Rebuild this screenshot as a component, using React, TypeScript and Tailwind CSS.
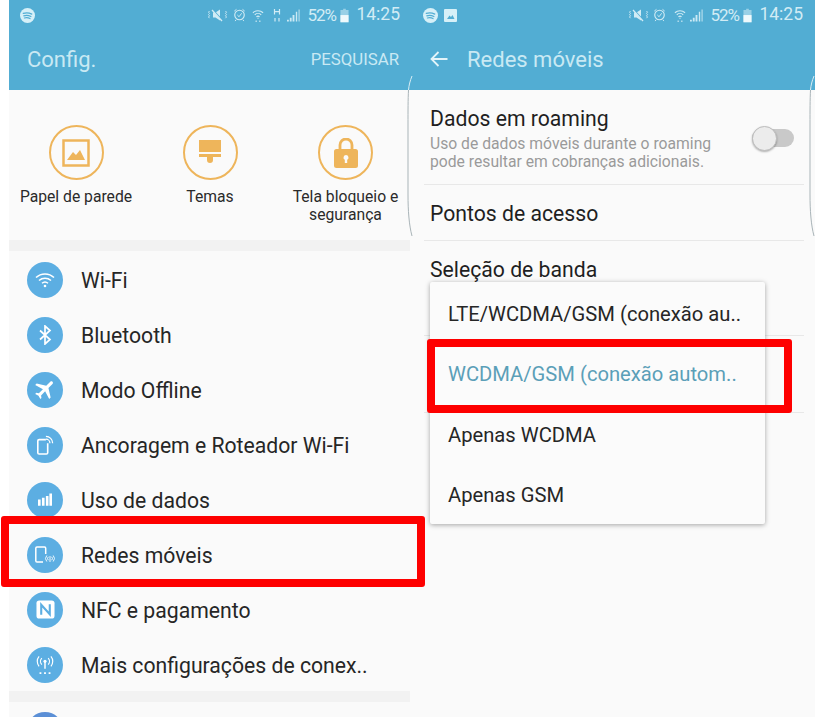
import React from "react";
import { MdFlight } from "react-icons/md";

const F = "font-['Roboto','Liberation_Sans',sans-serif]";

function Spotify() {
  return (
    <svg width="15" height="15" viewBox="0 0 15 15">
      <circle cx="7.5" cy="7.5" r="7.5" fill="#d6f0f8" />
      <path d="M3.2 5.4c3-.9 6-.6 8.6.7M3.8 7.8c2.5-.7 5-.4 7.1.7M4.4 10c2-.5 4-.3 5.6.6" fill="none" stroke="#52add3" strokeWidth="1.2" strokeLinecap="round" />
    </svg>
  );
}

function Status({ hsdpa }: { hsdpa?: boolean }) {
  const c = "#d2ecf5";
  return (
    <div className="flex items-center leading-none text-[#d2ecf5]">
      <svg width="20" height="14" viewBox="0 0 20 14" className={hsdpa ? "mr-[5px]" : "mr-[4px]"}>
        <path d="M5 4.5h2.5L12 1.5v11L7.500 9.500H5z" fill={c} />
        <path d="M4 1l11 12" stroke="#52add3" strokeWidth="1.500" />
        <path d="M4 2l10 11" stroke={c} strokeWidth="1.300" />
        <path d="M1.500 3l-1 1.200 1 1.200-1 1.200 1 1.200-1 1.200 1 1.200M17.500 3l1 1.200-1 1.200 1 1.200-1 1.200 1 1.200-1 1.200" fill="none" stroke={c} strokeWidth=".9" />
      </svg>
      <svg width="13" height="16" viewBox="0 0 15 16" className={hsdpa ? "mr-[6px]" : "mr-[8px]"}>
        <circle cx="7.500" cy="8" r="5.500" fill="none" stroke={c} strokeWidth="1.300" />
        <path d="M5 8l2 2 3-4M1.500 3.500L4 1.500M13.500 3.500L11 1.500M3.500 13.500l-1 1.500M11.500 13.500l1 1.500" fill="none" stroke={c} strokeWidth="1.100" />
      </svg>
      <svg width="12" height="15" viewBox="0 0 13 15" className={hsdpa ? "mr-[9px]" : "mr-[4px]"}>
        <path d="M1 4.500a8 8 0 0 1 11 0M3 6.800a5 5 0 0 1 7 0M4.800 9a2.500 2.500 0 0 1 3.400 0" fill="none" stroke={c} strokeWidth="1.200" />
        <path d="M6.500 10v1M4.500 13v1.500M8.500 13v1.500" stroke={c} strokeWidth="1.200" />
      </svg>
      {hsdpa && (
        <svg width="8" height="14" viewBox="0 0 8 14" className="mr-[6px]">
          <path d="M1.500 1v5.500M6.500 1v5.500M1.500 3.700h5M2 10v3.500M6 10v3.500" fill="none" stroke={c} strokeWidth="1.200" />
        </svg>
      )}
      <svg width="13" height="14" viewBox="0 0 14 14" className="mr-[7px]">
        <path d="M0 12h2v2H0zM3 10h2v4H3zM6 7h2v7H6zM9.500 3.500h1.500v10.500H9.500zM12.500 1h1v13h-1z" fill={c} opacity=".95" />
      </svg>
      <span className="w-[29px] whitespace-nowrap text-[17px] tracking-[-1px]">52%</span>
      <svg width="9" height="15" viewBox="0 0 10 15" className="ml-[4px] mr-[7px]">
        <path d="M3.500 0h3v1.500h3V15H.5V1.500h3z" fill={c} opacity=".55" />
        <path d="M.5 7h9v8h-9z" fill="#eef9fc" />
      </svg>
      <span className="text-[17.500px]">14:25</span>
    </div>
  );
}

function Circle({ children }: { children: React.ReactNode }) {
  return (
    <div className="flex h-[36px] w-[36px] shrink-0 items-center justify-center rounded-full bg-[#5caee2]">
      {children}
    </div>
  );
}

const st = { fill: "none", stroke: "#fff" } as const;

const rows: { label: string; icon: React.ReactNode }[] = [
  {
    label: "Wi-Fi",
    icon: (
      <svg width="22" height="18" viewBox="0 0 22 18">
        <path d="M2 6.500a13 13 0 0 1 18 0M5 9.500a9 9 0 0 1 12 0M8 12.300a4.500 4.500 0 0 1 6 0" {...st} strokeWidth="1.500" />
        <circle cx="11" cy="15" r="1.300" fill="#fff" />
      </svg>
    ),
  },
  {
    label: "Bluetooth",
    icon: (
      <svg width="14" height="20" viewBox="0 0 14 20">
        <path d="M2 5.500l10 9-5 4.500V1l5 4.500-10 9" {...st} strokeWidth="1.700" />
      </svg>
    ),
  },
  { label: "Modo Offline", icon: <MdFlight size={25} color="#fff" className="rotate-45" /> },
  {
    label: "Ancoragem e Roteador Wi-Fi",
    icon: (
      <svg width="18" height="20" viewBox="0 0 20 22">
        <path d="M11 5H3.500A1.500 1.500 0 0 0 2 6.500v13A1.500 1.500 0 0 0 3.500 21h8a1.500 1.500 0 0 0 1.500-1.500V9" {...st} strokeWidth="1.800" />
        <path d="M11 1.500a7.500 7.500 0 0 1 7.500 7.500M11 4.500A4.500 4.500 0 0 1 15.500 9" {...st} strokeWidth="1.400" />
      </svg>
    ),
  },
  {
    label: "Uso de dados",
    icon: (
      <svg width="14" height="13" viewBox="0 0 16 14">
        <path d="M0 7h3v7H0zM4.500 5h3v9h-3zM9 3h3v11H9zM13 0h3v14h-3z" fill="#fff" />
      </svg>
    ),
  },
  {
    label: "Redes móveis",
    icon: (
      <svg width="20" height="17" viewBox="0 0 20 17">
        <path d="M8 16H2A1.300 1.300 0 0 1 .8 14.700V2.300A1.300 1.300 0 0 1 2 1h7.500a1.300 1.300 0 0 1 1.200 1.300V8" {...st} strokeWidth="1.500" />
        <path d="M15 10v6M13.300 10.800a2.500 2.500 0 0 0 0 3.400M16.700 10.800a2.500 2.500 0 0 1 0 3.400M11.800 9.500a4.500 4.500 0 0 0 0 6M18.200 9.500a4.500 4.500 0 0 1 0 6" {...st} strokeWidth=".9" />
      </svg>
    ),
  },
  {
    label: "NFC e pagamento",
    icon: (
      <svg width="19" height="19" viewBox="0 0 20 20">
        <rect x="0.500" y="0.500" width="19" height="19" rx="3" fill="#fff" />
        <path d="M5.500 15.500V5l9 10V4.500" {...st} stroke="#5caee2" strokeWidth="2.200" />
      </svg>
    ),
  },
  {
    label: "Mais configurações de conex..",
    icon: (
      <svg width="20" height="20" viewBox="0 0 22 22">
        <path d="M11 7v8" {...st} strokeWidth="1.600" />
        <circle cx="11" cy="7" r="1.700" fill="#fff" />
        <path d="M7.500 3.500a5 5 0 0 0 0 7M14.500 3.500a5 5 0 0 1 0 7M4.500 1.500a8.500 8.500 0 0 0 0 11M17.500 1.500a8.500 8.500 0 0 1 0 11" {...st} strokeWidth="1.300" />
        <path d="M5 20h2M10 20h2M15 20h2" {...st} strokeWidth="2" />
      </svg>
    ),
  },
];

function Shortcut({ label, children }: { label: React.ReactNode; children: React.ReactNode }) {
  return (
    <div className="flex flex-col items-center">
      <div className="flex h-[55px] w-[55px] items-center justify-center rounded-full border-2 border-[#eeb55b]">
        {children}
      </div>
      <div className="mt-[8px] whitespace-nowrap text-center text-[15.7px] leading-[18px] text-[#2a2a2a]">{label}</div>
    </div>
  );
}

function Edge({ className }: { className: string }) {
  return (
    <svg width="6" height="162" viewBox="0 0 6 162" className={className}>
      <path d="M5 1C3 6 2 10 1.500 15" fill="none" stroke="#d9edf4" strokeWidth="1" />
      <path d="M1.500 15C1 25 1 35 1 50v70c0 15 1 30 4 41" fill="none" stroke="#a9b4b8" strokeWidth="1" />
    </svg>
  );
}

export default function App() {
  return (
    <div className={`relative flex h-[717px] w-[815px] overflow-hidden bg-white pl-[9px] ${F}`}>
      {/* Left phone */}
      <div className="flex w-[401px] shrink-0 flex-col bg-[#fafafa]">
        <div className="h-[90px] shrink-0 bg-[#52add3]">
          <div className="flex h-[30px] items-center justify-between pl-[11px] pr-[10px]">
            <Spotify />
            <Status hsdpa />
          </div>
          <div className="flex h-[60px] items-center justify-between pl-[18px] pr-[11px] text-[#c9e9f3]">
            <span className="pb-[1px] text-[22px]">Config.</span>
            <span className="text-[16.800px]">PESQUISAR</span>
          </div>
        </div>
        <div className="grid h-[150px] shrink-0 grid-cols-[134px_134px_133px] pt-[35px]">
          <Shortcut label="Papel de parede">
            <svg width="28" height="28" viewBox="0 0 28 28">
              <rect x="1.500" y="1.500" width="25" height="25" fill="none" stroke="#eeb55b" strokeWidth="2.500" />
              <path d="M5 21l6-8 3 3 4-5 5 10z" fill="#eeb55b" />
            </svg>
          </Shortcut>
          <Shortcut label="Temas">
            <svg width="22" height="26" viewBox="0 0 22 26">
              <path d="M0 0h22v12H0zM0 14h22v3H14v3a3 3 0 0 1-6 0v-3H0z" fill="#eeb55b" />
            </svg>
          </Shortcut>
          <div className="ml-[4px]">
            <Shortcut label={<>Tela bloqueio e<br />segurança</>}>
              <svg width="24" height="30" viewBox="0 0 24 30">
                <path d="M6 11V7a6 6 0 0 1 12 0v4" fill="none" stroke="#eeb55b" strokeWidth="2.800" />
                <path fillRule="evenodd" d="M2.500 11h19A2.500 2.500 0 0 1 24 13.500v14a2.500 2.500 0 0 1-2.500 2.500h-19A2.500 2.500 0 0 1 0 27.500v-14A2.500 2.500 0 0 1 2.500 11zM12 17a2.500 2.500 0 0 0-1.200 4.700V25h2.400v-3.300A2.500 2.500 0 0 0 12 17z" fill="#eeb55b" />
              </svg>
            </Shortcut>
          </div>
        </div>
        <div className="h-[11px] shrink-0 bg-[#f2f2f2]" />
        <div className="flex shrink-0 flex-col">
          {rows.map((r) => (
            <div key={r.label} className="flex h-[55px] items-center pl-[18px] pt-[2px]">
              <Circle>{r.icon}</Circle>
              <span className="ml-[18px] pt-[2px] text-[21.200px] text-[#262626]">{r.label}</span>
            </div>
          ))}
        </div>
        <div className="h-[11px] shrink-0 bg-[#f2f2f2]" />
        <div className="shrink-0 pl-[18px] pt-[10px]">
          <div className="h-[36px] w-[36px] rounded-full bg-[#5b8fd6]" />
        </div>
      </div>

      {/* Right phone */}
      <div className="flex w-[405px] shrink-0 flex-col bg-[#fafafa]">
        <div className="h-[90px] shrink-0 bg-[#52add3]">
          <div className="flex h-[30px] items-center justify-between pl-[13px] pr-[12px]">
            <div className="flex items-center gap-[6px]">
              <Spotify />
              <svg width="13" height="13" viewBox="0 0 13 13">
                <rect width="13" height="13" rx="1" fill="#d6f0f8" />
                <path d="M3 10l2.500-3.500 1.500 1.500 1.500-2 2 4z" fill="#52add3" />
              </svg>
            </div>
            <Status />
          </div>
          <div className="flex h-[60px] items-center pb-[2px] pl-[20px] text-[#c9e9f3]">
            <svg width="18" height="16" viewBox="0 0 18 16">
              <path d="M17.500 8H2M8.500 1L1.500 8l7 7" fill="none" stroke="#e3f4f9" strokeWidth="1.800" />
            </svg>
            <span className="ml-[19px] text-[22px]">Redes móveis</span>
          </div>
        </div>
        <div className="flex shrink-0 flex-col">
          <div className="relative ml-[14px] mr-[11px] h-[95px] border-b border-[#e8e8e8] pl-[6px] pt-[14px]">
            <div className="text-[21.200px] leading-[30px] text-[#1f1f1f]">Dados em roaming</div>
            <div className="mt-[1px] text-[15.700px] leading-[18px] text-[#9a9a9a]">
              Uso de dados móveis durante o roaming
              <br />
              pode resultar em cobranças adicionais.
            </div>
            <div className="absolute left-[328px] top-[39px] h-[18px] w-[42px] rounded-full bg-[#c9c9c9]">
              <div className="absolute -top-[3px] left-0 h-[25px] w-[25px] rounded-full border border-[#bdbdbd] bg-[#ececec] shadow-[0_1px_2px_rgba(0,0,0,0.3)]" />
            </div>
          </div>
          <div className="ml-[14px] mr-[11px] flex h-[56px] items-center border-b border-[#e8e8e8] pl-[6px] pt-[2px] text-[21.200px] text-[#1f1f1f]">
            Pontos de acesso
          </div>
          <div className="ml-[14px] mr-[11px] h-[95px] border-b border-[#e8e8e8] pl-[6px] pt-[14px] text-[21.200px] leading-[30px] text-[#1f1f1f]">
            Seleção de banda
          </div>
          <div className="ml-[14px] mr-[11px] h-[77px] border-b border-[#e8e8e8]" />
        </div>
      </div>

      {/* Curved screen edges */}
      <Edge className="absolute left-[407px] top-[75px]" />
      <Edge className="absolute left-[809px] top-[75px]" />

      {/* Dropdown */}
      <div className="absolute left-[430px] top-[282px] flex h-[242px] w-[335px] flex-col rounded-[2px] bg-[#fbfbfb] pl-[18px] pt-[2px] text-[20.200px] text-[#262626] shadow-[0_1px_5px_rgba(0,0,0,0.35)]">
        <div className="flex h-[60px] shrink-0 items-center">LTE/WCDMA/GSM (conexão au..</div>
        <div className="flex h-[60px] shrink-0 items-center text-[#5b9fb8]">WCDMA/GSM (conexão autom..</div>
        <div className="flex h-[60px] shrink-0 items-center pt-[2px]">Apenas WCDMA</div>
        <div className="flex h-[60px] shrink-0 items-center pt-[3px]">Apenas GSM</div>
      </div>

      {/* Red highlights */}
      <div className="absolute left-[1px] top-[516px] h-[71px] w-[424px] rounded-[3px] border-[8px] border-[#fe0000]" />
      <div className="absolute left-[427px] top-[339px] h-[74px] w-[365px] rounded-[3px] border-[8px] border-[#fe0000]" />
    </div>
  );
}
